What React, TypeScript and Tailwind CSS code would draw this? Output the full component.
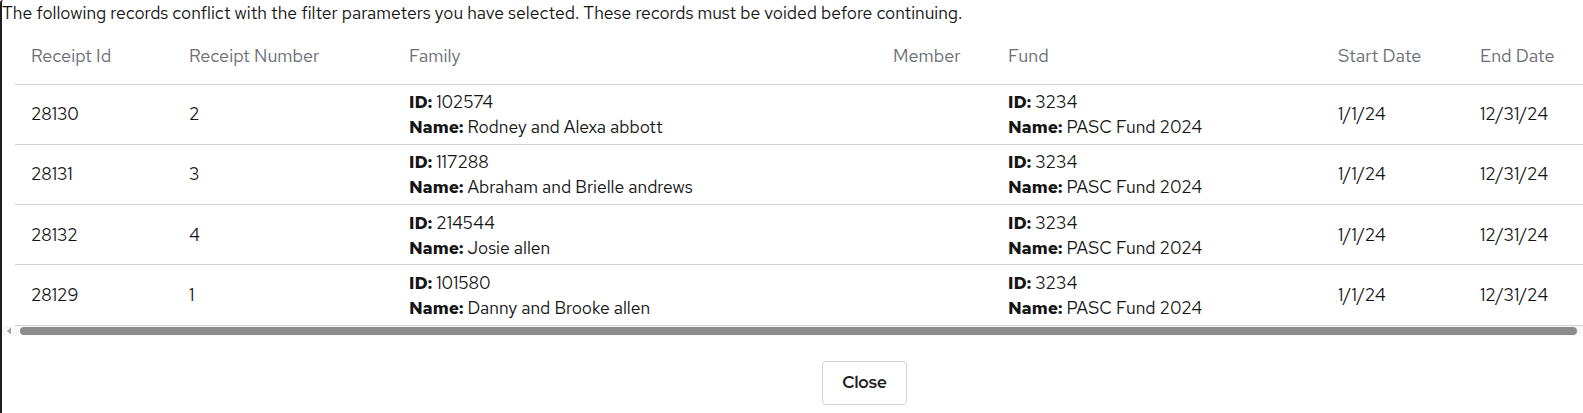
import React from "react";

const rows = [
  { rid: "28130", num: "2", fid: "102574", fname: "Rodney and Alexa abbott" },
  { rid: "28131", num: "3", fid: "117288", fname: "Abraham and Brielle andrews" },
  { rid: "28132", num: "4", fid: "214544", fname: "Josie allen" },
  { rid: "28129", num: "1", fid: "101580", fname: "Danny and Brooke allen" },
];

export default function App() {
  return (
    <div
      className="w-[1583px] h-[413px] bg-white text-[#151515] overflow-hidden"
      style={{ fontFamily: '"Red Hat Text", "Open Sans", "Liberation Sans", sans-serif' }}
    >
      <div className="h-full border-l-2 border-[#1e1e1e] rounded-tl-[3px] flex flex-col">
        <p className="text-[17.5px] leading-[24px] pt-[1px] whitespace-nowrap">
          The following records conflict with the filter parameters you have selected. These records must be voided before continuing.
        </p>
        <div className="overflow-hidden">
          <table className="table-fixed border-collapse w-[1600px] text-[17.5px] ml-[13px]">
            <colgroup>
              <col className="w-[158px]" />
              <col className="w-[220px]" />
              <col className="w-[484px]" />
              <col className="w-[115px]" />
              <col className="w-[330px]" />
              <col className="w-[142px]" />
              <col className="w-[151px]" />
            </colgroup>
            <thead>
              <tr className="h-[59px] border-b border-[#d2d2d2] text-[#6a6e73] text-[18px]">
                <th className="font-normal text-left pl-[16px] pt-[2px]">Receipt Id</th>
                <th className="font-normal text-left pl-[16px] pt-[2px]">Receipt Number</th>
                <th className="font-normal text-left pl-[16px] pt-[2px]">Family</th>
                <th className="font-normal text-left pl-[16px] pt-[2px]">Member</th>
                <th className="font-normal text-left pl-[16px] pt-[2px]">Fund</th>
                <th className="font-normal text-left pl-[16px] pt-[2px]">Start Date</th>
                <th className="font-normal text-left pl-[16px] pt-[2px]">End Date</th>
              </tr>
            </thead>
            <tbody>
              {rows.map((r) => (
                <tr key={r.rid} className="h-[60.3px] border-b border-[#d2d2d2]">
                  <td className="pl-[16px]">{r.rid}</td>
                  <td className="pl-[16px]">{r.num}</td>
                  <td className="pl-[16px] leading-[25px]">
                    <div>
                      <b>ID:</b> {r.fid}
                    </div>
                    <div>
                      <b>Name:</b> {r.fname}
                    </div>
                  </td>
                  <td className="pl-[16px]"></td>
                  <td className="pl-[16px] leading-[25px]">
                    <div>
                      <b>ID:</b> 3234
                    </div>
                    <div>
                      <b>Name:</b> PASC Fund 2024
                    </div>
                  </td>
                  <td className="pl-[16px]">1/1/24</td>
                  <td className="pl-[16px]">12/31/24</td>
                </tr>
              ))}
            </tbody>
          </table>
        </div>
        <div className="h-[10px] bg-[#f8f8f8] flex items-center">
          <svg width="18" height="10" viewBox="0 0 18 10" className="shrink-0">
            <polygon points="5,5 9,1.5 9,8.5" fill="#a3a3a3" />
          </svg>
          <div className="h-[8px] flex-1 mr-[6px] rounded-full bg-[#8c8c8c]"></div>
        </div>
        <div className="flex pt-[25px] pl-[820px]">
          <button
            className="w-[85px] h-[44px] border border-[#d2d2d2] rounded-[4px] font-bold text-[17px] text-[#1f1f1f] bg-white"
            style={{ fontFamily: '"Red Hat Display", "Red Hat Text", "Open Sans", sans-serif' }}
          >
            Close
          </button>
        </div>
      </div>
    </div>
  );
}
